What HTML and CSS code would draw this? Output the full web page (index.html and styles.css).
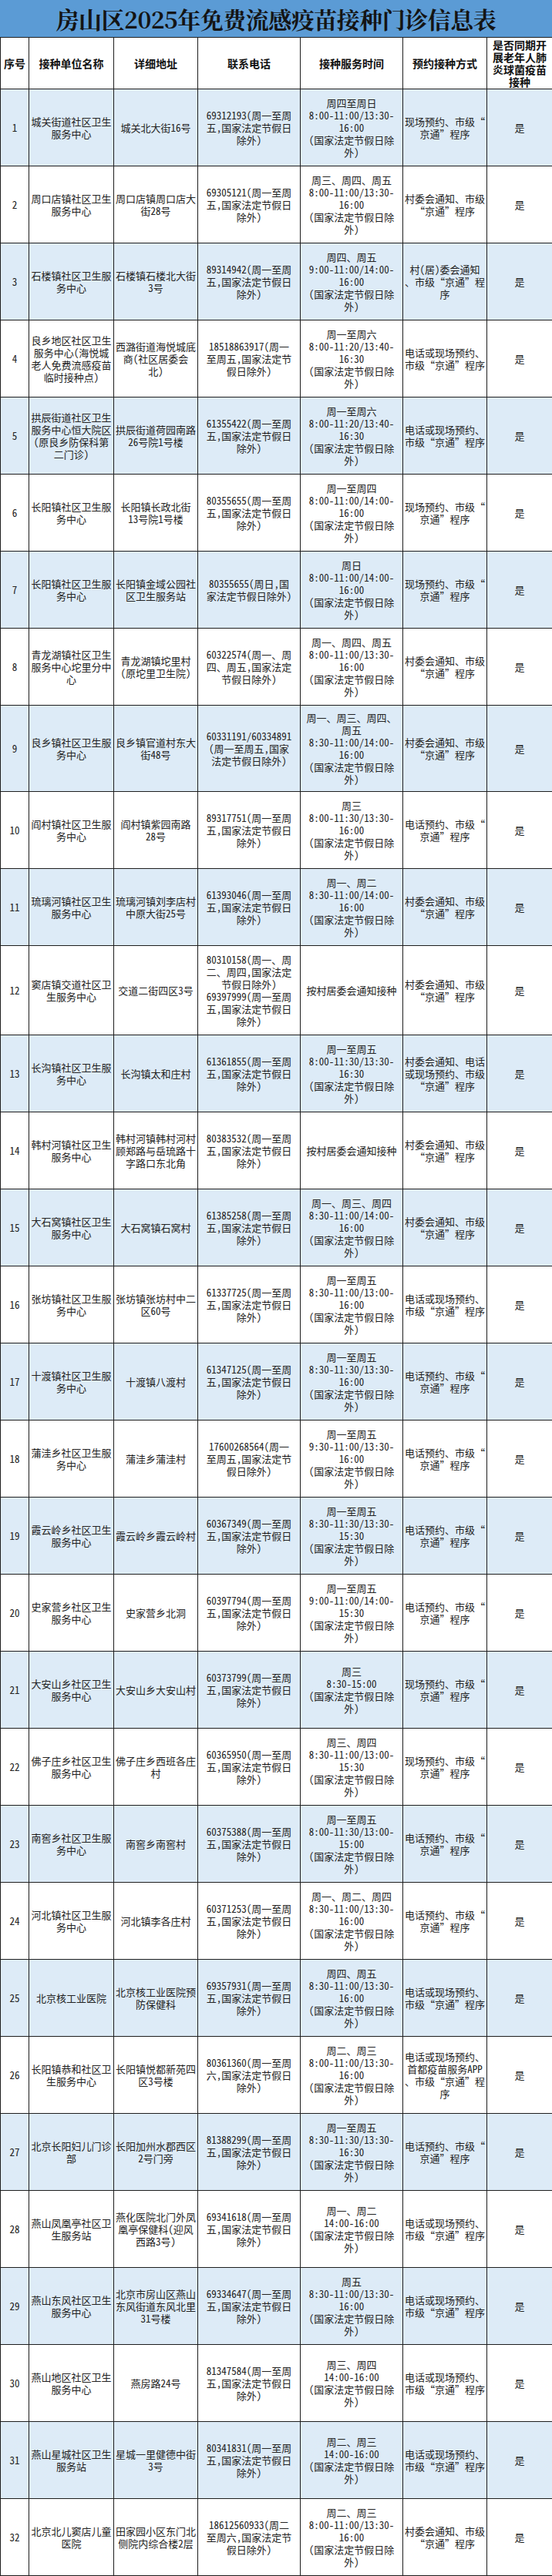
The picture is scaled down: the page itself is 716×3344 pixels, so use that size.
FILE: index.html
```html
<!DOCTYPE html>
<html lang="zh-CN">
<head>
<meta charset="utf-8">
<title>房山区2025年免费流感疫苗接种门诊信息表</title>
<link rel="stylesheet" href="styles.css">
</head>
<body>
<div class="page">
<h1 class="title">房山区2025年免费流感疫苗接种门诊信息表</h1>
<table class="grid">
<colgroup>
<col class="c1"><col class="c2"><col class="c3"><col class="c4"><col class="c5"><col class="c6"><col class="c7">
</colgroup>
<thead>
<tr class="head"><th>序号</th><th>接种单位名称</th><th>详细地址</th><th>联系电话</th><th>接种服务时间</th><th>预约接种方式</th><th>是否同期开<br>展老年人肺<br>炎球菌疫苗<br>接种</th></tr>
</thead>
<tbody>
<tr class="r alt"><td>1</td><td>城关街道社区卫生<br>服务中心</td><td>城关北大街16号</td><td>69312193（周一至周<br>五，国家法定节假日<br>除外）</td><td>周四至周日<br>8:00-11:00/13:30-<br>16:00<br>（国家法定节假日除<br>外）</td><td>现场预约、市级“<br>京通”程序</td><td>是</td></tr>
<tr class="r"><td>2</td><td>周口店镇社区卫生<br>服务中心</td><td>周口店镇周口店大<br>街28号</td><td>69305121（周一至周<br>五，国家法定节假日<br>除外）</td><td>周三、周四、周五<br>8:00-11:00/13:30-<br>16:00<br>（国家法定节假日除<br>外）</td><td>村委会通知、市级<br>“京通”程序</td><td>是</td></tr>
<tr class="r alt"><td>3</td><td>石楼镇社区卫生服<br>务中心</td><td>石楼镇石楼北大街<br>3号</td><td>89314942（周一至周<br>五，国家法定节假日<br>除外）</td><td>周四、周五<br>9:00-11:00/14:00-<br>16:00<br>（国家法定节假日除<br>外）</td><td>村（居）委会通知<br>、市级“京通”程<br>序</td><td>是</td></tr>
<tr class="r"><td>4</td><td>良乡地区社区卫生<br>服务中心（海悦城<br>老人免费流感疫苗<br>临时接种点）</td><td>西潞街道海悦城底<br>商（社区居委会<br>北）</td><td>18518863917（周一<br>至周五，国家法定节<br>假日除外）</td><td>周一至周六<br>8:00-11:20/13:40-<br>16:30<br>（国家法定节假日除<br>外）</td><td>电话或现场预约、<br>市级“京通”程序</td><td>是</td></tr>
<tr class="r alt"><td>5</td><td>拱辰街道社区卫生<br>服务中心恒大院区<br>（原良乡防保科第<br>二门诊）</td><td>拱辰街道荷园南路<br>26号院1号楼</td><td>61355422（周一至周<br>五，国家法定节假日<br>除外）</td><td>周一至周六<br>8:00-11:20/13:40-<br>16:30<br>（国家法定节假日除<br>外）</td><td>电话或现场预约、<br>市级“京通”程序</td><td>是</td></tr>
<tr class="r"><td>6</td><td>长阳镇社区卫生服<br>务中心</td><td>长阳镇长政北街<br>13号院1号楼</td><td>80355655（周一至周<br>五，国家法定节假日<br>除外）</td><td>周一至周四<br>8:00-11:00/14:00-<br>16:00<br>(国家法定节假日除<br>外)</td><td>现场预约、市级“<br>京通”程序</td><td>是</td></tr>
<tr class="r alt"><td>7</td><td>长阳镇社区卫生服<br>务中心</td><td>长阳镇金域公园社<br>区卫生服务站</td><td>80355655（周日，国<br>家法定节假日除外）</td><td>周日<br>8:00-11:00/14:00-<br>16:00<br>(国家法定节假日除<br>外)</td><td>现场预约、市级“<br>京通”程序</td><td>是</td></tr>
<tr class="r"><td>8</td><td>青龙湖镇社区卫生<br>服务中心坨里分中<br>心</td><td>青龙湖镇坨里村<br>（原坨里卫生院）</td><td>60322574（周一、周<br>四、周五，国家法定<br>节假日除外）</td><td>周一、周四、周五<br>8:00-11:00/13:30-<br>16:00<br>(国家法定节假日除<br>外)</td><td>村委会通知、市级<br>“京通”程序</td><td>是</td></tr>
<tr class="r h112 alt"><td>9</td><td>良乡镇社区卫生服<br>务中心</td><td>良乡镇官道村东大<br>街48号</td><td>60331191/60334891<br>（周一至周五，国家<br>法定节假日除外）</td><td>周一、周三、周四、<br>周五<br>8:30-11:00/14:00-<br>16:00<br>（国家法定节假日除<br>外）</td><td>村委会通知、市级<br>“京通”程序</td><td>是</td></tr>
<tr class="r"><td>10</td><td>阎村镇社区卫生服<br>务中心</td><td>阎村镇紫园南路<br>28号</td><td>89317751（周一至周<br>五，国家法定节假日<br>除外）</td><td>周三<br>8:00-11:30/13:30-<br>16:00<br>（国家法定节假日除<br>外）</td><td>电话预约、市级“<br>京通”程序</td><td>是</td></tr>
<tr class="r alt"><td>11</td><td>琉璃河镇社区卫生<br>服务中心</td><td>琉璃河镇刘李店村<br>中原大街25号</td><td>61393046（周一至周<br>五，国家法定节假日<br>除外）</td><td>周一、周二<br>8:30-11:00/14:00-<br>16:00<br>（国家法定节假日除<br>外）</td><td>村委会通知、市级<br>“京通”程序</td><td>是</td></tr>
<tr class="r h116"><td>12</td><td>窦店镇交道社区卫<br>生服务中心</td><td>交道二街四区3号</td><td>80310158（周一、周<br>二、周四，国家法定<br>节假日除外）<br>69397999（周一至周<br>五，国家法定节假日<br>除外）</td><td>按村居委会通知接种</td><td>村委会通知、市级<br>“京通”程序</td><td>是</td></tr>
<tr class="r alt"><td>13</td><td>长沟镇社区卫生服<br>务中心</td><td>长沟镇太和庄村</td><td>61361855（周一至周<br>五，国家法定节假日<br>除外）</td><td>周一至周五<br>8:00-11:30/13:30-<br>16:30<br>（国家法定节假日除<br>外）</td><td>村委会通知、电话<br>或现场预约、市级<br>“京通”程序</td><td>是</td></tr>
<tr class="r"><td>14</td><td>韩村河镇社区卫生<br>服务中心</td><td>韩村河镇韩村河村<br>顾郑路与岳琉路十<br>字路口东北角</td><td>80383532（周一至周<br>五，国家法定节假日<br>除外）</td><td>按村居委会通知接种</td><td>村委会通知、市级<br>“京通”程序</td><td>是</td></tr>
<tr class="r alt"><td>15</td><td>大石窝镇社区卫生<br>服务中心</td><td>大石窝镇石窝村</td><td>61385258（周一至周<br>五，国家法定节假日<br>除外）</td><td>周一、周三、周四<br>8:30-11:00/14:00-<br>16:00<br>（国家法定节假日除<br>外）</td><td>村委会通知、市级<br>“京通”程序</td><td>是</td></tr>
<tr class="r"><td>16</td><td>张坊镇社区卫生服<br>务中心</td><td>张坊镇张坊村中二<br>区60号</td><td>61337725（周一至周<br>五，国家法定节假日<br>除外）</td><td>周一至周五<br>8:30-11:00/13:00-<br>16:00<br>（国家法定节假日除<br>外）</td><td>电话或现场预约、<br>市级“京通”程序</td><td>是</td></tr>
<tr class="r alt"><td>17</td><td>十渡镇社区卫生服<br>务中心</td><td>十渡镇八渡村</td><td>61347125（周一至周<br>五，国家法定节假日<br>除外）</td><td>周一至周五<br>8:30-11:30/13:30-<br>16:00<br>（国家法定节假日除<br>外）</td><td>电话预约、市级“<br>京通”程序</td><td>是</td></tr>
<tr class="r"><td>18</td><td>蒲洼乡社区卫生服<br>务中心</td><td>蒲洼乡蒲洼村</td><td>17600268564（周一<br>至周五，国家法定节<br>假日除外）</td><td>周一至周五<br>9:30-11:00/13:30-<br>16:00<br>（国家法定节假日除<br>外）</td><td>电话预约、市级“<br>京通”程序</td><td>是</td></tr>
<tr class="r alt"><td>19</td><td>霞云岭乡社区卫生<br>服务中心</td><td>霞云岭乡霞云岭村</td><td>60367349（周一至周<br>五，国家法定节假日<br>除外）</td><td>周一至周五<br>8:30-11:30/13:30-<br>15:30<br>（国家法定节假日除<br>外）</td><td>电话预约、市级“<br>京通”程序</td><td>是</td></tr>
<tr class="r"><td>20</td><td>史家营乡社区卫生<br>服务中心</td><td>史家营乡北洞</td><td>60397794（周一至周<br>五，国家法定节假日<br>除外）</td><td>周一至周五<br>9:00-11:00/14:00-<br>15:30<br>（国家法定节假日除<br>外）</td><td>电话预约、市级“<br>京通”程序</td><td>是</td></tr>
<tr class="r alt"><td>21</td><td>大安山乡社区卫生<br>服务中心</td><td>大安山乡大安山村</td><td>60373799（周一至周<br>五，国家法定节假日<br>除外）</td><td>周三<br>8:30-15:00<br>（国家法定节假日除<br>外）</td><td>现场预约、市级“<br>京通”程序</td><td>是</td></tr>
<tr class="r"><td>22</td><td>佛子庄乡社区卫生<br>服务中心</td><td>佛子庄乡西班各庄<br>村</td><td>60365950（周一至周<br>五，国家法定节假日<br>除外）</td><td>周三、周四<br>8:30-11:00/13:00-<br>15:30<br>（国家法定节假日除<br>外）</td><td>现场预约、市级“<br>京通”程序</td><td>是</td></tr>
<tr class="r alt"><td>23</td><td>南窖乡社区卫生服<br>务中心</td><td>南窖乡南窖村</td><td>60375388（周一至周<br>五，国家法定节假日<br>除外）</td><td>周一至周五<br>8:00-11:30/13:00-<br>15:00<br>（国家法定节假日除<br>外）</td><td>电话预约、市级“<br>京通”程序</td><td>是</td></tr>
<tr class="r"><td>24</td><td>河北镇社区卫生服<br>务中心</td><td>河北镇李各庄村</td><td>60371253（周一至周<br>五，国家法定节假日<br>除外）</td><td>周一、周二、周四<br>8:30-11:00/13:30-<br>16:00<br>（国家法定节假日除<br>外）</td><td>电话预约、市级“<br>京通”程序</td><td>是</td></tr>
<tr class="r alt"><td>25</td><td>北京核工业医院</td><td>北京核工业医院预<br>防保健科</td><td>69357931（周一至周<br>五，国家法定节假日<br>除外）</td><td>周四、周五<br>8:30-11:00/13:30-<br>16:00<br>（国家法定节假日除<br>外）</td><td>电话或现场预约、<br>市级“京通”程序</td><td>是</td></tr>
<tr class="r"><td>26</td><td>长阳镇恭和社区卫<br>生服务中心</td><td>长阳镇悦都新苑四<br>区3号楼</td><td>80361360（周一至周<br>六，国家法定节假日<br>除外）</td><td>周二、周三<br>8:00-11:00/13:30-<br>16:00<br>（国家法定节假日除<br>外）</td><td>电话或现场预约、<br>首都疫苗服务APP<br>、市级“京通”程<br>序</td><td>是</td></tr>
<tr class="r alt"><td>27</td><td>北京长阳妇儿门诊<br>部</td><td>长阳加州水郡西区<br>2号门旁</td><td>81388299（周一至周<br>五，国家法定节假日<br>除外）</td><td>周一至周五<br>8:30-11:30/13:30-<br>16:30<br>（国家法定节假日除<br>外）</td><td>电话预约、市级“<br>京通”程序</td><td>是</td></tr>
<tr class="r"><td>28</td><td>燕山凤凰亭社区卫<br>生服务站</td><td>燕化医院北门外凤<br>凰亭保健科（迎风<br>西路3号）</td><td>69341618（周一至周<br>五，国家法定节假日<br>除外）</td><td>周一、周二<br>14:00-16:00<br>（国家法定节假日除<br>外）</td><td>电话或现场预约、<br>市级“京通”程序</td><td>是</td></tr>
<tr class="r alt"><td>29</td><td>燕山东风社区卫生<br>服务中心</td><td>北京市房山区燕山<br>东风街道东风北里<br>31号楼</td><td>69334647（周一至周<br>五，国家法定节假日<br>除外）</td><td>周五<br>8:30-11:00/13:30-<br>16:00<br>（国家法定节假日除<br>外）</td><td>电话或现场预约、<br>市级“京通”程序</td><td>是</td></tr>
<tr class="r"><td>30</td><td>燕山地区社区卫生<br>服务中心</td><td>燕房路24号</td><td>81347584（周一至周<br>五，国家法定节假日<br>除外）</td><td>周三、周四<br>14:00-16:00<br>（国家法定节假日除<br>外）</td><td>电话或现场预约、<br>市级“京通”程序</td><td>是</td></tr>
<tr class="r alt"><td>31</td><td>燕山星城社区卫生<br>服务站</td><td>星城一里健德中街<br>3号</td><td>80341831（周一至周<br>五，国家法定节假日<br>除外）</td><td>周二、周三<br>14:00-16:00<br>（国家法定节假日除<br>外）</td><td>电话或现场预约、<br>市级“京通”程序</td><td>是</td></tr>
<tr class="r"><td>32</td><td>北京北儿窦店儿童<br>医院</td><td>田家园小区东门北<br>侧院内综合楼2层</td><td>18612560933（周二<br>至周六，国家法定节<br>假日除外）</td><td>周二、周三<br>8:00-11:00/13:30-<br>16:00<br>（国家法定节假日除<br>外）</td><td>村委会通知、市级<br>“京通”程序</td><td>是</td></tr>
</tbody>
</table>
</div>
</body>
</html>
```
FILE: styles.css
```css
html, body {
  margin: 0;
  padding: 0;
  background: #ffffff;
}
.page {
  width: 716px;
  font-family: "Noto Sans CJK SC", "Noto Sans", sans-serif;
  color: #222222;
}
.title {
  margin: 0;
  height: 48px;
  line-height: 48px;
  background: #5b9bd5;
  text-align: center;
  font-family: "Noto Serif CJK SC", "Noto Sans CJK SC", serif;
  font-size: 30px;
  font-weight: 700;
  color: #141414;
  letter-spacing: -0.5px;
  white-space: nowrap;
}
.grid {
  width: 716px;
  table-layout: fixed;
  border-collapse: collapse;
  border-spacing: 0;
}
.c1 { width: 37px; }
.c2 { width: 110px; }
.c3 { width: 109px; }
.c4 { width: 133px; }
.c5 { width: 133px; }
.c6 { width: 109px; }
.c7 { width: 85px; }
.grid th,
.grid td {
  border: 1px solid #1e1e1e;
  padding: 0 1px;
  text-align: center;
  vertical-align: middle;
  white-space: nowrap;
  overflow: hidden;
}
.grid th {
  font-size: 14px;
  line-height: 16px;
  font-weight: 700;
  color: #111111;
}
.head {
  height: 67px;
  background: #ffffff;
}
.grid td {
  font-size: 13px;
  line-height: 16px;
  font-feature-settings: "hwid" 1;
}
.r {
  height: 100px;
  background: #ffffff;
}
.r.alt {
  background: #ddebf7;
}
.r.h112 { height: 112px; }
.r.h116 { height: 116px; }
```
